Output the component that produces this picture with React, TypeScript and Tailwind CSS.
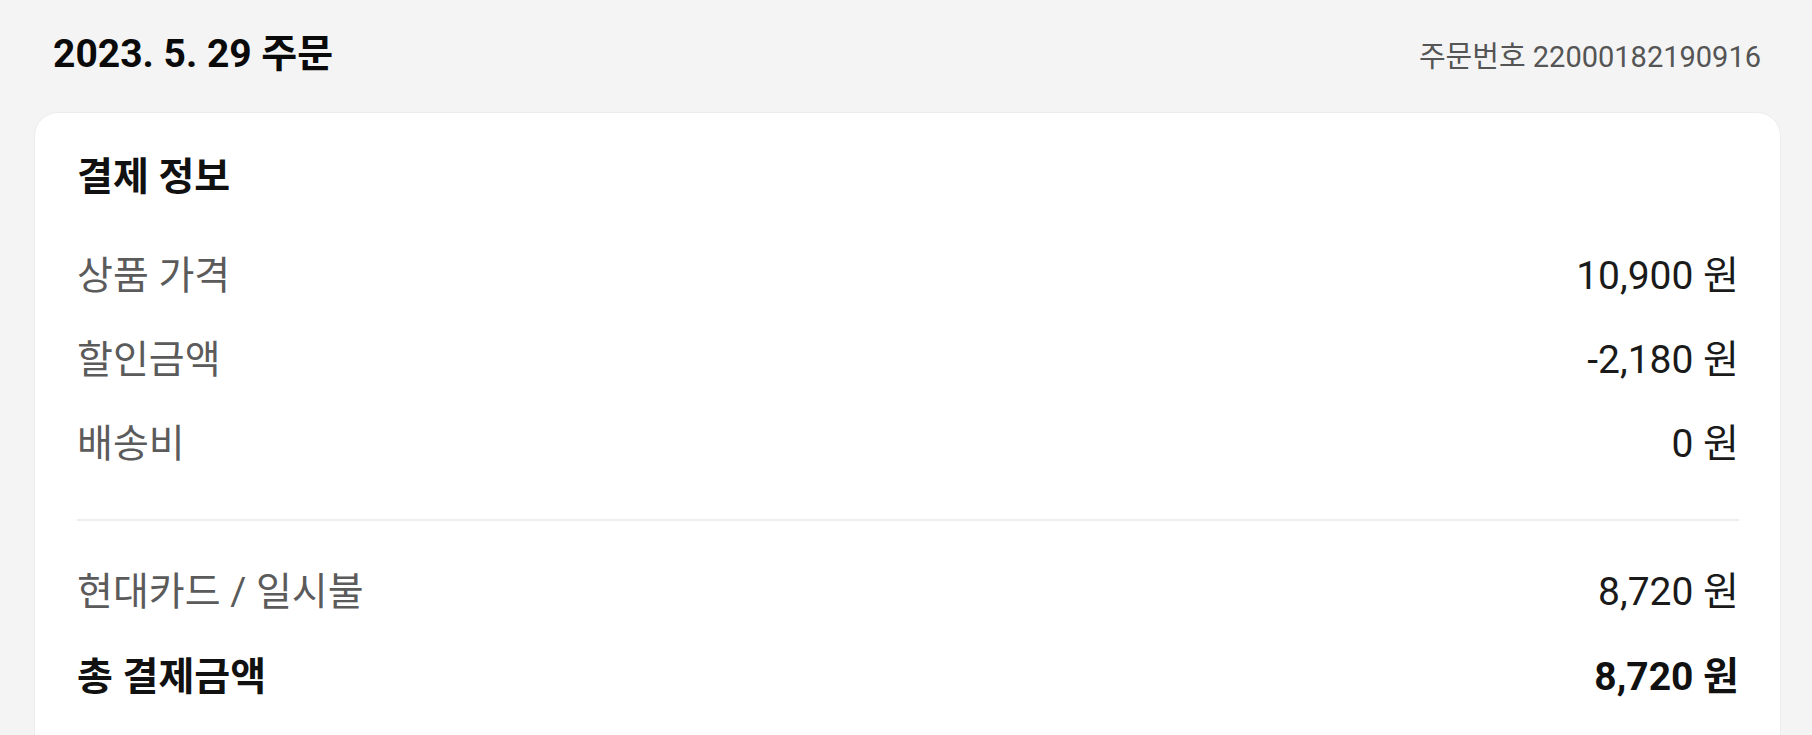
import React from "react";

const font = { fontFamily: "Roboto, 'Noto Sans CJK KR', 'Noto Sans', sans-serif" };

function Row({ label, value, bold, h }: { label: string; value: string; bold?: boolean; h: string }) {
  return (
    <div className={`flex items-center justify-between ${h}`}>
      <span className={bold ? "text-[39px] font-bold text-[#111111]" : "text-[39px] text-[#5b5b5b]"}>{label}</span>
      <span className={bold ? "text-[39px] font-bold text-[#111111]" : "text-[39px] text-[#1a1a1a]"}>{value}</span>
    </div>
  );
}

export default function App() {
  return (
    <div className="min-h-screen w-full overflow-hidden bg-[#f4f4f4]" style={font}>
      <div className="flex items-baseline justify-between pl-[53px] pr-[51px] pt-[26px] h-[112px]">
        <span className="text-[39px] leading-[56px] font-bold text-[#0a0a0a]">2023. 5. 29 주문</span>
        <span className="text-[29px] leading-[56px] text-[#555555]">주문번호 22000182190916</span>
      </div>
      <div className="ml-[34px] mr-[31px] rounded-t-[24px] border border-[#ececec] bg-white pl-[42px] pr-[41px] pt-[40px] pb-[60px]">
        <div className="text-[39px] leading-[48px] font-bold text-[#111111]">결제 정보</div>
        <div className="mt-[33px]">
          <Row label="상품 가격" value="10,900 원" h="h-[84px]" />
          <Row label="할인금액" value="-2,180 원" h="h-[84px]" />
          <Row label="배송비" value="0 원" h="h-[84px]" />
        </div>
        <div className="mt-[33px] h-[2px] bg-[#eeeeee]" />
        <div className="mt-[29px]">
          <Row label="현대카드 / 일시불" value="8,720 원" h="h-[85px]" />
          <Row label="총 결제금액" value="8,720 원" bold h="h-[85px]" />
        </div>
      </div>
    </div>
  );
}
